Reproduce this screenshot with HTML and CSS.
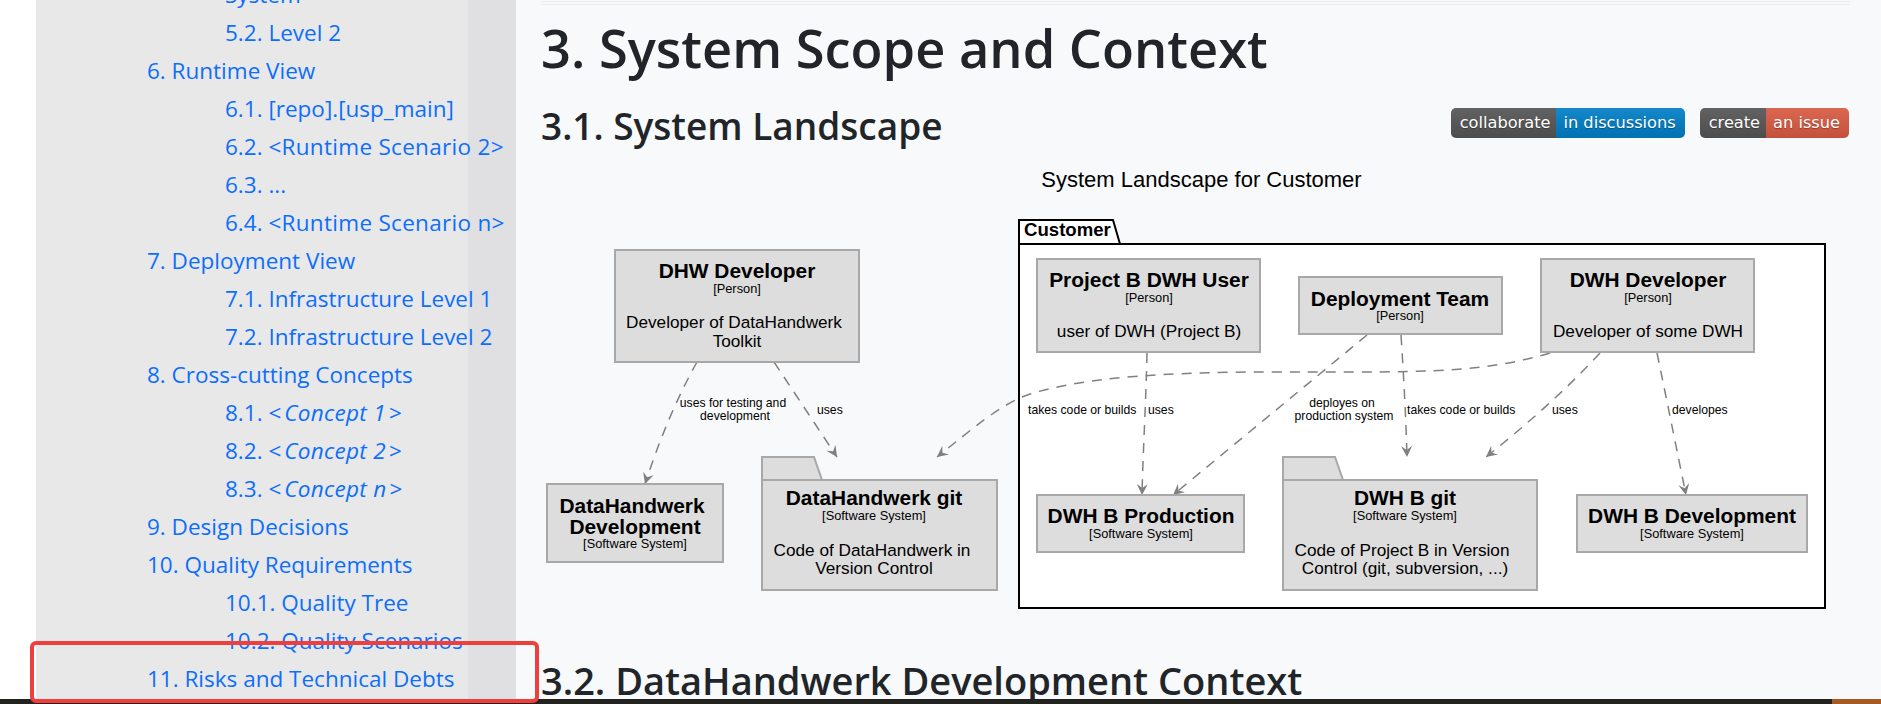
FILE: index.html
```html
<!DOCTYPE html>
<html lang="en">
<head>
    <meta charset="UTF-8">
    <meta name="viewport" content="width=device-width, initial-scale=1.0">
    <title>3. System Scope and Context</title>
    <link rel="stylesheet" href="styles.css">
</head>
<body>
    <div class="page">
        <div class="columns">
            <nav class="sidebar">
                <ul class="toc">
                    <li>
                        <ul class="sub">
                            <li><a href="#">System</a></li>
                            <li><a href="#">5.2. Level 2</a></li>
                        </ul>
                    </li>
                    <li><a href="#">6. Runtime View</a>
                        <ul class="sub">
                            <li><a href="#">6.1. [repo].[usp_main]</a></li>
                            <li><a href="#">6.2. <span class="scenario">&lt;Runtime Scenario 2&gt;</span></a></li>
                            <li><a href="#">6.3. ...</a></li>
                            <li><a href="#">6.4. <span class="scenario">&lt;Runtime Scenario n&gt;</span></a></li>
                        </ul>
                    </li>
                    <li><a href="#">7. Deployment View</a>
                        <ul class="sub">
                            <li><a href="#">7.1. Infrastructure Level 1</a></li>
                            <li><a href="#">7.2. Infrastructure Level 2</a></li>
                        </ul>
                    </li>
                    <li><a href="#">8. Cross-cutting Concepts</a>
                        <ul class="sub">
                            <li><a href="#">8.1. &lt;<em>Concept 1</em>&gt;</a></li>
                            <li><a href="#">8.2. &lt;<em>Concept 2</em>&gt;</a></li>
                            <li><a href="#">8.3. &lt;<em>Concept n</em>&gt;</a></li>
                        </ul>
                    </li>
                    <li><a href="#">9. Design Decisions</a></li>
                    <li><a href="#">10. Quality Requirements</a>
                        <ul class="sub">
                            <li><a href="#">10.1. Quality Tree</a></li>
                            <li><a href="#">10.2. Quality Scenarios</a></li>
                        </ul>
                    </li>
                    <li><a href="#">11. Risks and Technical Debts</a></li>
                </ul>
            </nav>

            <main class="content">
                <div class="rule"></div>
                <h1>3. System Scope and Context</h1>
                <div class="section-head">
                    <h2>3.1. System Landscape</h2>
                    <div class="badges">
                        <a class="badge" href="#"><span class="badge-label">collaborate</span><span class="badge-value blue">in discussions</span></a>
                        <a class="badge" href="#"><span class="badge-label">create</span><span class="badge-value red">an issue</span></a>
                    </div>
                </div>

                <svg class="diagram" viewBox="541 160 1309 460" width="1309" height="460">
                    <defs>
                        <marker id="arrow" markerUnits="userSpaceOnUse" markerWidth="20" markerHeight="20" refX="15" refY="10" orient="auto">
                            <path class="arrow-head" d="M15,10 L4,4.5 L8,10 L4,15.5 Z"/>
                        </marker>
                    </defs>

                    <text class="title" x="1201.5" y="186">System Landscape for Customer</text>

                    <!-- package -->
                    <path class="package" d="M1019,243 V219 H1113 L1120,243 M1019,243 H1825 V607 H1019 Z"/>
                    <text class="package-name" x="1024" y="235">Customer</text>

                    <!-- links -->
                    <path class="link" d="M697,361 C682,388 664,425 645,483"/>
                    <path class="link" d="M774,361 L837,456"/>
                    <path class="link" d="M1550,352 C1490,370 1430,371 1350,371 C1250,371 1110,368 1030,393 C1000,403 970,430 937,456"/>
                    <path class="link" d="M1147,352 C1146,400 1143,450 1142,494"/>
                    <path class="link" d="M1367,334 L1173,494"/>
                    <path class="link" d="M1401,334 C1404,380 1406,420 1407,456"/>
                    <path class="link" d="M1600,352 C1565,390 1525,425 1486,456"/>
                    <path class="link" d="M1657,352 C1667,400 1677,450 1686,494"/>

                    <text class="link-label mid" x="733" y="406">uses for testing and</text>
                    <text class="link-label mid" x="735" y="419">development</text>
                    <text class="link-label" x="817" y="413">uses</text>
                    <text class="link-label" x="1028" y="413">takes code or builds</text>
                    <text class="link-label" x="1148" y="413">uses</text>
                    <text class="link-label mid" x="1342" y="406">deployes on</text>
                    <text class="link-label mid" x="1344" y="419">production system</text>
                    <text class="link-label" x="1407" y="413">takes code or builds</text>
                    <text class="link-label" x="1552" y="413">uses</text>
                    <text class="link-label" x="1672" y="413">developes</text>

                    <!-- DHW Developer -->
                    <rect class="node" x="615" y="249" width="244" height="112"/>
                    <text class="node-name" x="737" y="277">DHW Developer</text>
                    <text class="node-kind" x="737" y="292">[Person]</text>
                    <text class="node-text" x="734" y="327">Developer of DataHandwerk</text>
                    <text class="node-text" x="737" y="346">Toolkit</text>

                    <!-- DataHandwerk Development -->
                    <rect class="node" x="547" y="483" width="176" height="78"/>
                    <text class="node-name" x="632" y="512">DataHandwerk</text>
                    <text class="node-name" x="635" y="533">Development</text>
                    <text class="node-kind" x="635" y="547">[Software System]</text>

                    <!-- DataHandwerk git -->
                    <path class="node" d="M762,479 V456 H814 L822,479 Z"/>
                    <rect class="node" x="762" y="479" width="235" height="110"/>
                    <text class="node-name" x="874" y="504">DataHandwerk git</text>
                    <text class="node-kind" x="874" y="519">[Software System]</text>
                    <text class="node-text" x="872" y="555">Code of DataHandwerk in</text>
                    <text class="node-text" x="874" y="573">Version Control</text>

                    <!-- Project B DWH User -->
                    <rect class="node" x="1037" y="258" width="223" height="93"/>
                    <text class="node-name" x="1149" y="286">Project B DWH User</text>
                    <text class="node-kind" x="1149" y="301">[Person]</text>
                    <text class="node-text" x="1149" y="336">user of DWH (Project B)</text>

                    <!-- Deployment Team -->
                    <rect class="node" x="1299" y="276" width="203" height="57"/>
                    <text class="node-name" x="1400" y="305">Deployment Team</text>
                    <text class="node-kind" x="1400" y="319">[Person]</text>

                    <!-- DWH Developer -->
                    <rect class="node" x="1541" y="258" width="213" height="93"/>
                    <text class="node-name" x="1648" y="286">DWH Developer</text>
                    <text class="node-kind" x="1648" y="301">[Person]</text>
                    <text class="node-text" x="1648" y="336">Developer of some DWH</text>

                    <!-- DWH B Production -->
                    <rect class="node" x="1037" y="494" width="207" height="57"/>
                    <text class="node-name" x="1141" y="522">DWH B Production</text>
                    <text class="node-kind" x="1141" y="537">[Software System]</text>

                    <!-- DWH B git -->
                    <path class="node" d="M1283,479 V456 H1335 L1343,479 Z"/>
                    <rect class="node" x="1283" y="479" width="254" height="110"/>
                    <text class="node-name" x="1405" y="504">DWH B git</text>
                    <text class="node-kind" x="1405" y="519">[Software System]</text>
                    <text class="node-text" x="1402" y="555">Code of Project B in Version</text>
                    <text class="node-text" x="1405" y="573">Control (git, subversion, ...)</text>

                    <!-- DWH B Development -->
                    <rect class="node" x="1577" y="494" width="230" height="57"/>
                    <text class="node-name" x="1692" y="522">DWH B Development</text>
                    <text class="node-kind" x="1692" y="537">[Software System]</text>
                </svg>

                <h2 class="next-section">3.2. DataHandwerk Development Context</h2>
            </main>
        </div>

        <div class="taskbar">
            <div class="taskbar-end"></div>
        </div>

        <div class="highlight"></div>
    </div>
</body>
</html>
```

FILE: styles.css
```css
* {
    box-sizing: border-box;
}
html, body {
    margin: 0;
    height: 100%;
    overflow: hidden;
}
body {
    font-family: "Open Sans", "Noto Sans", sans-serif;
    background-color: #fff;
    color: #212529;
}
a {
    color: #0d6efd;
    text-decoration: none;
}
.page {
    position: relative;
    display: flex;
    flex-direction: column;
    height: 704px;
    overflow: hidden;
}
.columns {
    flex: 1;
    min-height: 0;
    display: flex;
    padding-left: 36px;
}

/* sidebar */
.sidebar {
    width: 480px;
    flex-shrink: 0;
    background: linear-gradient(to right, #e8e8e9 432px, #e0e0e2 432px);
    overflow: hidden;
}
.toc, .sub {
    list-style: none;
    margin: 0;
    padding: 0;
}
.toc {
    margin-top: -24px;
    padding-left: 111px;
    font-size: 22.5px;
    line-height: 38px;
    white-space: nowrap;
}
.sub {
    padding-left: 78px;
}
.scenario {
    letter-spacing: 0.3px;
}
.toc em {
    margin: 0 3px;
    letter-spacing: 0.3px;
}

/* main column */
.content {
    flex: 1;
    min-width: 0;
    padding: 1px 31px 0 25px;
    background-color: #f8f9fa;
    overflow: hidden;
}
.rule {
    height: 4px;
    border-top: 1px solid #eceef0;
    border-bottom: 1px solid #eceef0;
}
h1, h2 {
    margin: 0;
    font-weight: 600;
    white-space: nowrap;
}
h1 {
    margin-top: 10px;
    font-size: 52.4px;
    line-height: 66px;
}
h2 {
    font-size: 37px;
    line-height: 50px;
}
.section-head {
    margin-top: 20px;
    height: 60px;
    display: flex;
    justify-content: space-between;
    align-items: flex-start;
}
.next-section {
    margin-top: 34px;
    font-size: 38px;
}

/* badges */
.badges {
    display: flex;
    gap: 15px;
    margin-top: 7px;
    margin-right: 1px;
}
.badge {
    display: flex;
    height: 30px;
    border-radius: 5px;
    overflow: hidden;
    font-family: "DejaVu Sans", sans-serif;
    font-size: 16.2px;
    line-height: 29px;
    color: #fff;
    text-shadow: 0 1px 1px rgba(1,1,1,0.3);
}
.badge-label, .badge-value {
    background-image: linear-gradient(rgba(255,255,255,0.08), rgba(0,0,0,0.1));
}
.badge-label {
    padding: 0 6px 0 9px;
    background-color: #555;
}
.badge-value {
    padding: 0 9px 0 7px;
}
.blue {
    background-color: #007ec6;
}
.red {
    background-color: #d85a42;
}

/* diagram */
.diagram {
    display: block;
    font-family: "Liberation Sans", Arial, sans-serif;
}
.diagram text {
    fill: #000;
}
.diagram .title {
    font-size: 22px;
    text-anchor: middle;
}
.package {
    fill: #fff;
    stroke: #000;
    stroke-width: 2;
}
.diagram .package-name {
    font-size: 18.6px;
    font-weight: bold;
}
.node {
    fill: #ddd;
    stroke: #a8a8a8;
    stroke-width: 2;
}
.diagram .node-name {
    font-size: 20.9px;
    font-weight: bold;
    text-anchor: middle;
}
.diagram .node-kind {
    font-size: 12.8px;
    text-anchor: middle;
}
.diagram .node-text {
    font-size: 17.2px;
    text-anchor: middle;
}
.link {
    fill: none;
    stroke: #808080;
    stroke-width: 1.5;
    stroke-dasharray: 10 8;
    marker-end: url(#arrow);
}
.arrow-head {
    fill: #808080;
}
.diagram .link-label {
    font-size: 12.2px;
}
.diagram .mid {
    text-anchor: middle;
}

/* bottom strip */
.taskbar {
    flex-shrink: 0;
    height: 5px;
    display: flex;
    justify-content: flex-end;
    background-color: #22231f;
}
.taskbar-end {
    width: 49px;
    background-color: #a55a22;
}

/* red annotation over the page */
.highlight {
    position: absolute;
    left: 30px;
    top: 641px;
    width: 509px;
    height: 62px;
    border: 4px solid #ef3e3e;
    border-radius: 6px;
}
```
